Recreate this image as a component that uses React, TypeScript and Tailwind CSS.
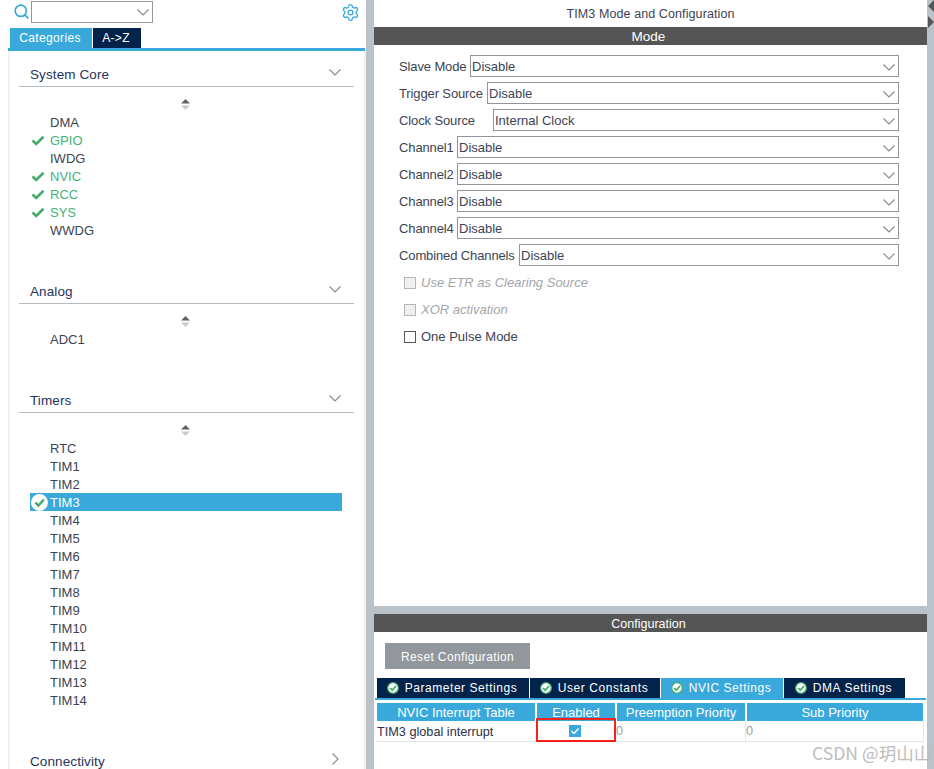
import { Settings, Search } from 'lucide-react';

const sections = [
  {
    title: 'System Core',
    items: [
      { name: 'DMA' },
      { name: 'GPIO', ok: true },
      { name: 'IWDG' },
      { name: 'NVIC', ok: true },
      { name: 'RCC', ok: true },
      { name: 'SYS', ok: true },
      { name: 'WWDG' },
    ],
  },
  { title: 'Analog', items: [{ name: 'ADC1' }] },
  {
    title: 'Timers',
    items: [
      { name: 'RTC' },
      { name: 'TIM1' },
      { name: 'TIM2' },
      { name: 'TIM3', selected: true },
      { name: 'TIM4' },
      { name: 'TIM5' },
      { name: 'TIM6' },
      { name: 'TIM7' },
      { name: 'TIM8' },
      { name: 'TIM9' },
      { name: 'TIM10' },
      { name: 'TIM11' },
      { name: 'TIM12' },
      { name: 'TIM13' },
      { name: 'TIM14' },
    ],
  },
];

const modes = [
  { label: 'Slave Mode', value: 'Disable', w: 'w-[71px]' },
  { label: 'Trigger Source', value: 'Disable', w: 'w-[88px]' },
  { label: 'Clock Source', value: 'Internal Clock', w: 'w-[94px]', pad: 'pl-[1px]' },
  { label: 'Channel1', value: 'Disable', w: 'w-[58px]' },
  { label: 'Channel2', value: 'Disable', w: 'w-[58px]' },
  { label: 'Channel3', value: 'Disable', w: 'w-[58px]' },
  { label: 'Channel4', value: 'Disable', w: 'w-[58px]' },
  { label: 'Combined Channels', value: 'Disable', w: 'w-[120px]' },
];

function Chevron({ right = false }: { right?: boolean }) {
  return (
    <svg width="12" height="12" viewBox="0 0 12 12" fill="none" stroke="#85898c" strokeWidth="1.1">
      <path d={right ? 'M3.5 0.5 L9 6 L3.5 11.5' : 'M0.5 3.5 L6 9 L11.5 3.5'} />
    </svg>
  );
}

function SortIcon() {
  return (
    <div className="flex h-[18px] justify-center pr-[2px] pt-[4px]">
      <svg width="9" height="11" viewBox="0 0 9 11">
        <path d="M4.5 0 L9 4.5 H0 Z" fill="#5f6368" />
        <path d="M4.5 11 L9 6.5 H0 Z" fill="#c9cccf" />
      </svg>
    </div>
  );
}

function Tick() {
  return (
    <svg width="14" height="11" viewBox="0 0 14 11">
      <path d="M1.5 5.5 L5.2 9 L12.5 1.8" fill="none" stroke="#43ab6c" strokeWidth="2.6" />
    </svg>
  );
}

function OkBadge({ size = 14, ring = false }: { size?: number; ring?: boolean }) {
  return (
    <svg width={size} height={size} viewBox="0 0 18 18" className="shrink-0">
      <circle cx="9" cy="9" r={ring ? 8 : 9} fill="#ffffff" stroke={ring ? '#43ab6c' : 'none'} strokeWidth="2" />
      <path d="M4.6 9 L7.8 12.2 L13.6 6" fill="none" stroke="#43ab6c" strokeWidth="2.6" />
    </svg>
  );
}

function Tab({ label, active = false, w }: { label: string; active?: boolean; w: string }) {
  return (
    <div
      className={`flex h-[20px] items-center justify-center gap-[6px] pr-[2px] text-[12px] tracking-[0.55px] text-white ${w} ${
        active ? 'bg-[#39a9dc]' : 'bg-[#03234b]'
      }`}
    >
      <OkBadge size={12} ring />
      {label}
    </div>
  );
}

export default function App() {
  return (
    <div className="relative flex h-[769px] w-[934px] overflow-hidden bg-[#b9c3c9] font-['Liberation_Sans',sans-serif] text-[13px] text-[#3c4354]">
      {/* Left panel */}
      <div className="flex w-[366px] shrink-0 flex-col bg-white">
        <div className="flex h-[28px] shrink-0 items-start pl-[13px] pr-[6px] pt-[1px]">
          <Search size={17} strokeWidth={2.4} className="mt-[2px] text-[#39a9dc]" />
          <div className="ml-[1px] flex h-[22px] w-[122px] items-center justify-end border border-[#929699] pr-[3px]">
            <Chevron />
          </div>
          <Settings size={19} strokeWidth={1.7} className="ml-auto mt-[2px] text-[#39a9dc]" />
        </div>
        <div className="flex shrink-0 pl-[10px]">
          <div className="flex h-[20px] w-[82px] items-center justify-center bg-[#39a9dc] pr-[2px] text-[12px] tracking-[0.35px] text-white">
            Categories
          </div>
          <div className="ml-[1px] flex h-[20px] w-[48px] items-center justify-center bg-[#03234b] pr-[2px] text-[12px] tracking-[0.35px] text-white">
            A-&gt;Z
          </div>
        </div>
        <div className="ml-[8px] mr-[1px] h-[3px] shrink-0 bg-[#39a9dc]" />
        <div className="ml-[8px] flex-1 overflow-hidden border-x-2 border-[#f0f0f0] pl-[9px] pr-[10px] pt-[10px]">
          {sections.map((s) => (
            <div key={s.title} className="mb-[39px]">
              <div className="flex h-[26px] justify-between border-b border-[#b4bcc2] pl-[11px] pr-[13px] pt-[5px] text-[#23335c]">
                <span className="text-[13.5px] leading-[18px] tracking-[0.1px]">{s.title}</span>
                <Chevron />
              </div>
              <div className="mt-[8px]">
                <SortIcon />
              </div>
              <div>
                {s.items.map((it: { name: string; ok?: boolean; selected?: boolean }) => (
                  <div
                    key={it.name}
                    className={`ml-[11px] flex h-[18px] w-[312px] items-center pt-[1px] ${
                      it.selected ? 'bg-[#39a9dc] text-white' : it.ok ? 'text-[#43b377]' : ''
                    }`}
                  >
                    <div className="flex w-[20px] shrink-0 items-center pl-[1px]">
                      {it.ok && <Tick />}
                      {it.selected && <OkBadge size={17} />}
                    </div>
                    {it.name}
                  </div>
                ))}
              </div>
            </div>
          ))}
          <div className="flex h-[26px] justify-between pl-[11px] pr-[13px] pt-[5px] text-[#23335c]">
            <span className="text-[13.5px] leading-[18px] tracking-[0.1px]">Connectivity</span>
            <Chevron right />
          </div>
        </div>
      </div>

      {/* Right panel */}
      <div className="ml-[8px] flex w-[553px] shrink-0 flex-col gap-[8px]">
        <div className="flex h-[606px] shrink-0 flex-col bg-white">
          <div className="flex h-[27px] shrink-0 items-center justify-center pt-[1px] text-[12.5px] tracking-[0.1px]">
            TIM3 Mode and Configuration
          </div>
          <div className="flex h-[18px] shrink-0 items-center justify-center bg-[#545554] pr-[4px] pt-[2px] text-[13.5px] text-white">
            Mode
          </div>
          <div className="flex flex-col gap-[5px] pl-[25px] pt-[10px]">
            {modes.map((m) => (
              <div key={m.label} className="flex h-[22px] items-center">
                <div className={`shrink-0 whitespace-nowrap pt-[1px] tracking-[-0.12px] ${m.w}`}>{m.label}</div>
                <div
                  className={`mr-[28px] flex h-[22px] flex-1 items-center justify-between border border-[#929699] pr-[3px] pt-[1px] ${m.pad ?? 'pl-[1px]'}`}
                >
                  {m.value}
                  <Chevron />
                </div>
              </div>
            ))}
            <div className="flex h-[22px] items-center gap-[5px] pl-[5px] pt-[1px] italic text-[#a3a6a9]">
              <div className="h-[12px] w-[12px] border border-[#b4b7ba] bg-[#f0f0f0]" />
              Use ETR as Clearing Source
            </div>
            <div className="flex h-[22px] items-center gap-[5px] pl-[5px] pt-[1px] italic text-[#a3a6a9]">
              <div className="h-[12px] w-[12px] border border-[#b4b7ba] bg-[#f0f0f0]" />
              XOR activation
            </div>
            <div className="flex h-[22px] items-center gap-[5px] pl-[5px] pt-[1px]">
              <div className="h-[12px] w-[12px] border border-[#55585b] bg-white" />
              One Pulse Mode
            </div>
          </div>
        </div>

        <div className="relative flex-1 bg-white">
          <div className="flex h-[18px] items-center justify-center bg-[#545554] pr-[4px] pt-[2px] text-[12.5px] text-white">
            Configuration
          </div>
          <div className="ml-[11px] mt-[11px] flex h-[26px] w-[145px] items-center justify-center bg-[#91979c] pt-[1px] text-[12px] tracking-[0.37px] text-white">
            Reset Configuration
          </div>
          <div className="ml-[3px] mt-[9px] flex gap-[1px]">
            <Tab label="Parameter Settings" w="w-[152px]" />
            <Tab label="User Constants" w="w-[130px]" />
            <Tab label="NVIC Settings" active w="w-[122px]" />
            <Tab label="DMA Settings" w="w-[121px]" />
          </div>
          <div className="ml-[1px] h-[2px] w-[551px] bg-[#39a9dc]" />
          <div className="ml-[3px] mt-[3px] flex h-[18px] gap-[2px] text-[13px] text-white">
            <div className="flex w-[158px] items-center justify-center bg-[#39a9dc] pt-[1px]">NVIC Interrupt Table</div>
            <div className="flex w-[78px] items-center justify-center bg-[#39a9dc] pt-[1px]">Enabled</div>
            <div className="flex w-[128px] items-center justify-center bg-[#39a9dc] pt-[1px]">Preemption Priority</div>
            <div className="flex w-[176px] items-center justify-center bg-[#39a9dc] pt-[1px]">Sub Priority</div>
          </div>
          <div className="ml-[3px] flex h-[21px] w-[547px] items-center border-b border-[#e2e4e6] text-[12.7px]">
            <div className="w-[160px] shrink-0 pt-[3px] text-[#2b2f4a]">TIM3 global interrupt</div>
            <div className="flex w-[78px] shrink-0 justify-center pr-[2px]">
              <div className="flex h-[12px] w-[12px] items-center justify-center bg-[#39a9dc]">
                <svg width="10" height="10" viewBox="0 0 10 10">
                  <path d="M1.5 5 L4 7.5 L8.5 2.5" fill="none" stroke="#ffffff" strokeWidth="1.4" />
                </svg>
              </div>
            </div>
            <div className="flex h-full w-[130px] shrink-0 items-center border-l border-[#e2e4e6] pt-[2px] text-[#9a9ea8]">0</div>
            <div className="flex h-full flex-1 items-center border-x border-[#e2e4e6] pt-[2px] text-[#9a9ea8]">0</div>
          </div>
          <div className="absolute left-[162px] top-[104px] h-[24px] w-[80px] border-2 border-[#f5221b]" />
          <div className="absolute left-[438px] top-[126px] whitespace-nowrap font-['Noto_Sans_CJK_SC',sans-serif] text-[17.6px] text-[#bdbdbd]">
            CSDN @玥山山
          </div>
        </div>
      </div>

      {/* Collapse arrows on the right splitter */}
      <svg width="7" height="30" viewBox="0 0 7 30" className="absolute right-0 top-0">
        <path d="M7 0 V12 L1 6 Z" fill="#545554" />
        <path d="M1 16 V28 L7 22 Z" fill="#545554" />
      </svg>
    </div>
  );
}
